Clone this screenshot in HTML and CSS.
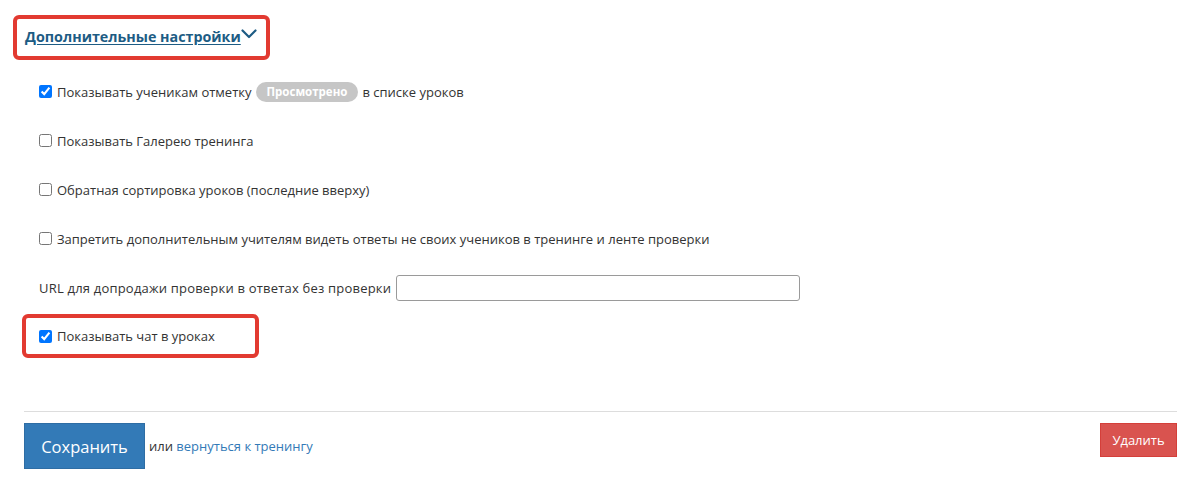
FILE: index.html
```html
<!DOCTYPE html>
<html lang="ru">
<head>
<meta charset="utf-8">
<link rel="stylesheet" href="styles.css">
</head>
<body>
<div class="page">
  <div class="title-box">
    <a class="title-link" href="#">Дополнительные настройки</a><svg class="chevron" width="16" height="10" viewBox="0 0 16 10"><path d="M1.5 1.5 L8 8 L14.5 1.5" fill="none" stroke="#1d5c84" stroke-width="2.2" stroke-linecap="round" stroke-linejoin="round"/></svg>
  </div>
  <div class="settings">
    <label class="row"><input type="checkbox" checked> Показывать ученикам отметку <span class="badge">Просмотрено</span> в списке уроков</label>
    <label class="row"><input type="checkbox"> Показывать Галерею тренинга</label>
    <label class="row"><input type="checkbox"> Обратная сортировка уроков (последние вверху)</label>
    <label class="row"><input type="checkbox"> Запретить дополнительным учителям видеть ответы не своих учеников в тренинге и ленте проверки</label>
    <div class="row url-row"><span>URL для допродажи проверки в ответах без проверки</span><input class="url-input" type="text"></div>
    <div class="chat-box"><label class="row chat-row"><input type="checkbox" checked> Показывать чат в уроках</label></div>
  </div>
  <div class="actions">
    <div class="left">
      <button class="btn btn-save">Сохранить</button>
      <span class="or">или <a href="#" class="back">вернуться к тренингу</a></span>
    </div>
    <button class="btn btn-delete">Удалить</button>
  </div>
</div>
</body>
</html>
```

FILE: styles.css
```css
* { box-sizing: border-box; }
html, body { margin: 0; padding: 0; background: #fff; }
body {
  font-family: "Open Sans", "Liberation Sans", sans-serif;
  font-size: 13px;
  color: #333;
  width: 1200px;
  height: 483px;
  overflow: hidden;
}
.page { padding: 15px 23px 0 13px; }
.title-box {
  display: flex;
  align-items: center;
  width: 257px;
  height: 45px;
  border: 4px solid #e23a31;
  border-radius: 6px;
  padding: 0 0 2px 8px;
  white-space: nowrap;
}
.title-link {
  font-weight: 700;
  font-size: 14.3px;
  color: #1d5c84;
  text-decoration: underline;
  text-underline-offset: 2px;
}
.chevron { margin-left: 0; margin-top: -5px; flex: none; }
.settings { padding-left: 26px; padding-top: 7px; }
.row {
  display: flex;
  align-items: center;
  height: 49px;
  white-space: nowrap;
}
.row input[type=checkbox] {
  margin: 0 5px 0 0;
  width: 13px;
  height: 13px;
}
.badge {
  display: inline-block;
  background: #c6c6c6;
  color: #fff;
  font-weight: 700;
  font-size: 11.5px;
  line-height: 20px;
  height: 20px;
  padding: 0 11px;
  border-radius: 10px;
  margin: 0 4px;
}
.url-row span { margin-right: 5px; letter-spacing: 0.2px; }
.url-input {
  width: 404px;
  height: 26px;
  border: 1px solid #9a9a9a;
  border-radius: 3px;
  margin: 0;
  padding: 2px 4px;
}
.chat-box {
  margin-left: -17px;
  width: 237px;
  height: 44px;
  border: 4px solid #e23a31;
  border-radius: 6px;
  padding-left: 13px;
  margin-top: 2px;
  display: flex;
  align-items: center;
}
.chat-row { height: auto; }
.actions {
  margin-top: 53px;
  margin-left: 11px;
  border-top: 1px solid #ddd;
  padding-top: 11px;
  display: flex;
  justify-content: space-between;
  align-items: flex-start;
}
.left { display: flex; align-items: center; }
.btn {
  font-family: "Open Sans", "Liberation Sans", sans-serif;
  color: #fff;
  cursor: pointer;
  border-radius: 0;
}
.btn-save {
  width: 121px;
  height: 46px;
  background: #337ab7;
  border: 1px solid #2e6da4;
  font-size: 16.5px;
}
.or { margin-left: 4px; color: #333; }
.back { color: #337ab7; text-decoration: none; }
.btn-delete {
  width: 77px;
  height: 34px;
  background: #d9534f;
  border: 1px solid #d43f3a;
  font-size: 13px;
}
```
